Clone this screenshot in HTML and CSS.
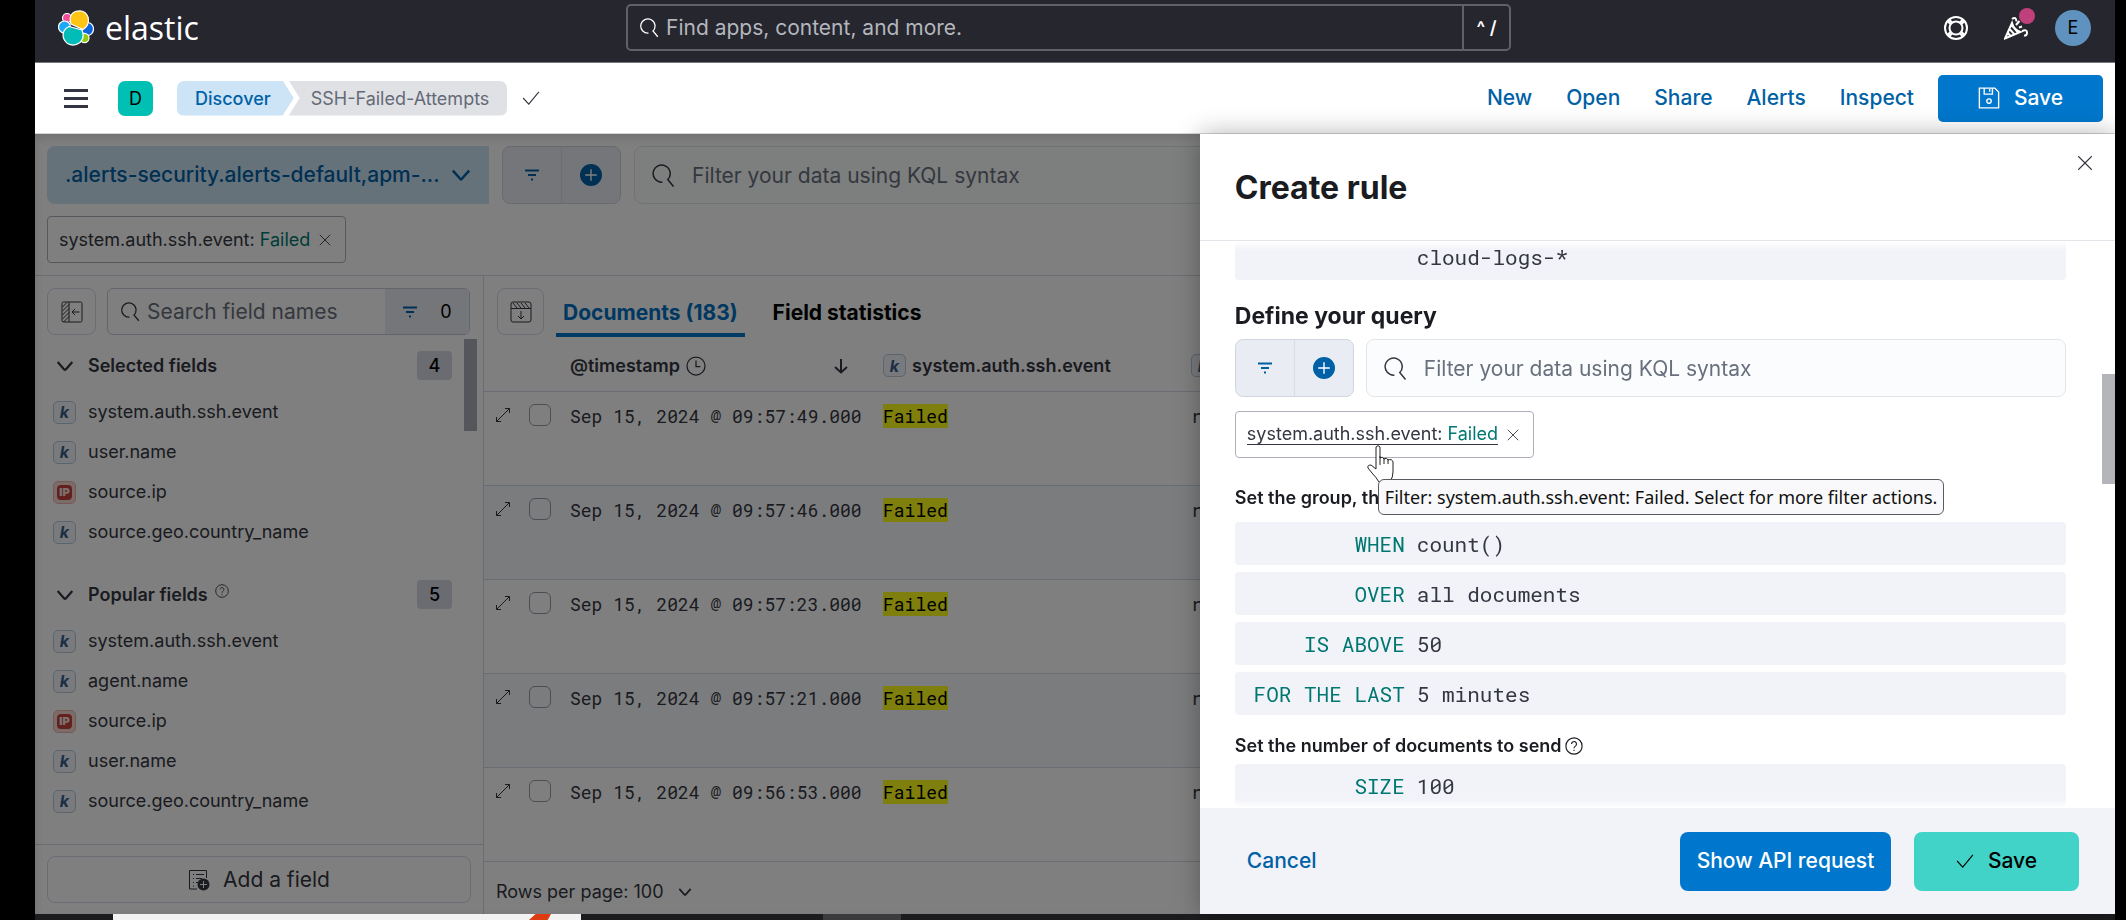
FILE: index.html
```html
<!DOCTYPE html>
<html lang="en">
<head>
<meta charset="utf-8">
<title>SSH-Failed-Attempts - Discover - Elastic</title>
<link rel="stylesheet" href="styles.css">
</head>
<body>
<svg class="sprite" aria-hidden="true">
  <symbol id="search" viewBox="0 0 16 16"><path d="M7.600 12.100A5.700 5.700 0 1 1 11.200 10.400L15 15"/></symbol>
  <symbol id="chevron" viewBox="0 0 16 16"><path d="M1.5 4.5 7.3 11q.7.7 1.4 0l5.8-6.5"/></symbol>
  <symbol id="check" viewBox="0 0 16 16"><path d="m1 8 5 5.5L15 2.5"/></symbol>
  <symbol id="cross" viewBox="0 0 16 16"><path d="m2 2 12 12M14 2 2 14"/></symbol>
  <symbol id="filter" viewBox="0 0 16 16"><path d="M1 3.5h14M4 8h8M7 12.5h2"/></symbol>
  <symbol id="plus" viewBox="0 0 16 16"><circle cx="8" cy="8" r="8" fill="currentColor" stroke="none"/><path class="cut" d="M8 3.8v8.4M3.8 8h8.4"/></symbol>
  <symbol id="help" viewBox="0 0 16 16"><circle cx="8" cy="8" r="7.2"/><path d="M5.8 6.3a2.2 2.2 0 1 1 3.4 1.8Q8 8.800 8 10M8 11.300v1.200"/></symbol>
  <symbol id="clock" viewBox="0 0 16 16"><circle cx="8" cy="8" r="7.200"/><path d="M8 3.500V8.500h3.500"/></symbol>
  <symbol id="down" viewBox="0 0 16 16"><path d="M8 1v13.500M2 9l6 5.500L14 9"/></symbol>
  <symbol id="expand" viewBox="0 0 16 16"><path d="M10 1.500h4.500V6M14.500 1.500l-13 13M1.500 10v4.500H6"/></symbol>
  <symbol id="floppy" viewBox="0 0 16 16"><path d="M1 .8h11.200L15 3.600v11.600H1zM4.500 1v4.200h6V1M8.500 1.500v2"/><circle cx="8" cy="10.200" r="1.600"/></symbol>
  <symbol id="side" viewBox="0 0 22 22"><rect x="1" y="1" width="20" height="20" rx="1.500"/><path d="M8 1v20M1.500 6 6 1.500M1.500 10 8 3.500M1.500 14 8 7.500M1.500 18 8 11.500M2.500 21 8 15.500M18.500 11H11M14 8l-3 3 3 3"/></symbol>
  <symbol id="topbox" viewBox="0 0 22 22"><rect x="1" y="1" width="20" height="20" rx="2"/><path d="M1 7.500h20M3 2l4 5M7 2l4 5M11 2l4 5M15 2l4 5M11 10v8M8 15l3 3 3-3"/></symbol>
  <symbol id="addfield" viewBox="0 0 22 22"><path d="M9 20H1.500V1.500h17V9M5 5.500h1M8 5.500h8M5 9.500h1M8 9.500h6M5 13.500h1M8 13.500h2M5 17h1"/><circle cx="15.500" cy="15.500" r="6" fill="currentColor" stroke="none"/><path class="cut" d="M15.500 12v7M12 15.500h7"/></symbol>
  <symbol id="buoy" viewBox="0 0 24 24"><circle cx="12" cy="12" r="11"/><circle cx="12" cy="12" r="6.500"/><path d="M5 3.500 8.500 7M3.500 5 7 8.500M19 3.500 15.500 7M20.500 5 17 8.500M5 20.500 8.500 17M3.500 19 7 15.500M19 20.500 15.500 17M20.500 19 17 15.500"/></symbol>
  <symbol id="cheer" viewBox="0 0 24 24"><path d="M8 7 1 22.500 16.500 16Q10 14 8 7zM5.500 13l5 5.500M4 17l3 3.500M8 9.500l6 7M8 3q4-3 4.500 2.500M12 9l3.500-4M15 11.500l3-1M18 15q5-2 5 1.500t-3 3"/></symbol>
</svg>

<header class="global">
  <a class="brand" href="#">
    <svg class="brand-mark" viewBox="0 0 36 36" aria-hidden="true">
      <g stroke="#fff" stroke-width="1.200">
        <ellipse cx="9" cy="8" rx="4.500" ry="4.500" fill="#f04e98"/>
        <ellipse cx="6.500" cy="17" rx="6" ry="6" fill="#1ba9f5"/>
        <ellipse cx="29.500" cy="19" rx="6" ry="6.500" fill="#0b64dd"/>
        <ellipse cx="26.500" cy="28" rx="4.500" ry="4.700" fill="#93c90e"/>
        <path d="M13 14Q10 4 18 1.300q9-2.300 12 5.700 2 8-5 12.500z" fill="#fec514"/>
        <path d="M11 16.500 24 20q3 8-2 12.500-6 4.500-12.500 1Q3 28 6 21q1.500-3 5-4.500z" fill="#02bcb7"/>
      </g>
    </svg>
    <span class="brand-name">elastic</span>
  </a>
  <form class="global-search">
    <svg class="icon icon-20"><use href="#search"/></svg>
    <input type="search" aria-label="Find apps, content, and more" placeholder="Find apps, content, and more.">
    <span class="keys">^ /</span>
  </form>
  <div class="global-actions">
    <button class="plain" aria-label="Help"><svg class="icon icon-24"><use href="#buoy"/></svg></button>
    <button class="plain news" aria-label="News"><svg class="icon icon-24"><use href="#cheer"/></svg><span class="dot"></span></button>
    <button class="avatar" aria-label="Account">E</button>
  </div>
</header>

<nav class="appbar">
  <button class="plain burger" aria-label="Menu"><span></span><span></span><span></span></button>
  <span class="space">D</span>
  <div class="crumbs">
    <a class="crumb crumb-first" href="#">Discover</a>
    <span class="crumb crumb-last">SSH-Failed-Attempts</span>
  </div>
  <svg class="icon icon-18"><use href="#check"/></svg>
  <div class="links">
    <a href="#">New</a><a href="#">Open</a><a href="#">Share</a><a href="#">Alerts</a><a href="#">Inspect</a>
  </div>
  <button class="btn btn-primary btn-save"><svg class="icon icon-22"><use href="#floppy"/></svg>Save</button>
</nav>

<div class="workspace">
  <section class="discover">
    <div class="query">
      <button class="dataview"><span>.alerts-security.alerts-default,apm-...</span><svg class="icon icon-20"><use href="#chevron"/></svg></button>
      <div class="pair">
        <button aria-label="Saved queries"><svg class="icon icon-16"><use href="#filter"/></svg></button>
        <button aria-label="Add filter"><svg class="icon icon-22"><use href="#plus"/></svg></button>
      </div>
      <label class="kql"><svg class="icon icon-24"><use href="#search"/></svg><input type="text" aria-label="Query" placeholder="Filter your data using KQL syntax"></label>
    </div>
    <div class="pills">
      <div class="pill"><a href="#">system.auth.ssh.event: <span>Failed</span></a><button class="plain" aria-label="Remove filter"><svg class="icon icon-14"><use href="#cross"/></svg></button></div>
    </div>
    <div class="panes">
      <aside class="sidebar">
        <div class="sidebar-top">
          <button class="square" aria-label="Hide sidebar"><svg class="icon icon-22"><use href="#side"/></svg></button>
          <div class="field-search">
            <svg class="icon icon-20"><use href="#search"/></svg>
            <input type="search" aria-label="Search field names" placeholder="Search field names">
            <button class="field-filter"><svg class="icon icon-16"><use href="#filter"/></svg>0</button>
          </div>
        </div>
        <div class="fields">
          <div class="thumb"></div>
          <h3><svg class="icon icon-20"><use href="#chevron"/></svg>Selected fields<span class="count">4</span></h3>
          <ul>
            <li><i class="token">k</i>system.auth.ssh.event</li>
            <li><i class="token">k</i>user.name</li>
            <li><i class="token token-ip"><b>IP</b></i>source.ip</li>
            <li><i class="token">k</i>source.geo.country_name</li>
          </ul>
          <h3><svg class="icon icon-20"><use href="#chevron"/></svg>Popular fields<svg class="icon icon-14 raised"><use href="#help"/></svg><span class="count">5</span></h3>
          <ul>
            <li><i class="token">k</i>system.auth.ssh.event</li>
            <li><i class="token">k</i>agent.name</li>
            <li><i class="token token-ip"><b>IP</b></i>source.ip</li>
            <li><i class="token">k</i>user.name</li>
            <li><i class="token">k</i>source.geo.country_name</li>
          </ul>
        </div>
        <div class="sidebar-foot"><button class="add-field"><svg class="icon icon-22"><use href="#addfield"/></svg>Add a field</button></div>
      </aside>
      <div class="results">
        <div class="tabs">
          <button class="square" aria-label="Show chart"><svg class="icon icon-22"><use href="#topbox"/></svg></button>
          <button class="tab tab-on">Documents (183)</button>
          <button class="tab">Field statistics</button>
        </div>
        <table class="grid">
          <thead><tr>
            <th class="c-act"></th>
            <th class="c-time"><div class="th"><span>@timestamp</span><svg class="icon icon-20"><use href="#clock"/></svg><svg class="icon icon-16 push"><use href="#down"/></svg></div></th>
            <th class="c-event"><div class="th"><i class="token">k</i><span>system.auth.ssh.event</span></div></th>
            <th><div class="th"><i class="token">k</i><span>user.name</span></div></th>
          </tr></thead>
          <tbody>
            <tr><td><div class="acts"><svg class="icon icon-16"><use href="#expand"/></svg><input type="checkbox" aria-label="Select row 1"></div></td><td>Sep 15, 2024 @ 09:57:49.000</td><td><mark>Failed</mark></td><td>root</td></tr>
            <tr><td><div class="acts"><svg class="icon icon-16"><use href="#expand"/></svg><input type="checkbox" aria-label="Select row 2"></div></td><td>Sep 15, 2024 @ 09:57:46.000</td><td><mark>Failed</mark></td><td>root</td></tr>
            <tr><td><div class="acts"><svg class="icon icon-16"><use href="#expand"/></svg><input type="checkbox" aria-label="Select row 3"></div></td><td>Sep 15, 2024 @ 09:57:23.000</td><td><mark>Failed</mark></td><td>root</td></tr>
            <tr><td><div class="acts"><svg class="icon icon-16"><use href="#expand"/></svg><input type="checkbox" aria-label="Select row 4"></div></td><td>Sep 15, 2024 @ 09:57:21.000</td><td><mark>Failed</mark></td><td>root</td></tr>
            <tr><td><div class="acts"><svg class="icon icon-16"><use href="#expand"/></svg><input type="checkbox" aria-label="Select row 5"></div></td><td>Sep 15, 2024 @ 09:56:53.000</td><td><mark>Failed</mark></td><td>root</td></tr>
          </tbody>
        </table>
        <button class="rows-per-page">Rows per page: 100<svg class="icon icon-14"><use href="#chevron"/></svg></button>
      </div>
    </div>
  </section>

  <div class="veil"></div>

  <aside class="flyout" role="dialog" aria-labelledby="flyout-title">
    <div class="flyout-head">
      <h2 id="flyout-title">Create rule</h2>
      <button class="plain close" aria-label="Close"><svg class="icon icon-18"><use href="#cross"/></svg></button>
    </div>
    <div class="flyout-body">
      <div class="expr expr-first"><span class="val">cloud-logs-*</span></div>
      <h4 class="big">Define your query</h4>
      <div class="query">
        <div class="pair">
          <button aria-label="Saved queries"><svg class="icon icon-16"><use href="#filter"/></svg></button>
          <button aria-label="Add filter"><svg class="icon icon-22"><use href="#plus"/></svg></button>
        </div>
        <label class="kql"><svg class="icon icon-24"><use href="#search"/></svg><input type="text" aria-label="Rule query" placeholder="Filter your data using KQL syntax"></label>
      </div>
      <div class="pill pill-hover">
        <a href="#">system.auth.ssh.event: <span>Failed</span></a><button class="plain" aria-label="Remove filter"><svg class="icon icon-14"><use href="#cross"/></svg></button>
        <svg class="hand" viewBox="0 0 28 40" aria-hidden="true"><path d="M9 3q2-3 4 0v11q3-2 4 1 3-2 4 1 4-1.500 5 2v10q0 5-3 10H12Q9 33 5 29L1 24q-1-3 3-3l5 4z"/><path d="M13 12v9M17 14v6M21 15v5"/></svg>
        <div class="tip" role="tooltip">Filter: system.auth.ssh.event: Failed. Select for more filter actions.</div>
      </div>
      <h4>Set the group, threshold, and time window</h4>
      <div class="exprs">
        <button class="expr"><span class="key">WHEN</span><span class="val">count()</span></button>
        <button class="expr"><span class="key">OVER</span><span class="val">all documents</span></button>
        <button class="expr"><span class="key">IS ABOVE</span><span class="val">50</span></button>
        <button class="expr"><span class="key">FOR THE LAST</span><span class="val">5 minutes</span></button>
      </div>
      <h4>Set the number of documents to send<svg class="icon icon-18"><use href="#help"/></svg></h4>
      <button class="expr"><span class="key">SIZE</span><span class="val">100</span></button>
    </div>
    <div class="flyout-thumb"></div>
    <div class="flyout-foot">
      <button class="plain cancel">Cancel</button>
      <button class="btn btn-primary btn-api">Show API request</button>
      <button class="btn btn-success"><svg class="icon icon-18"><use href="#check"/></svg>Save</button>
    </div>
  </aside>
</div>

<footer class="desktop"><div class="window"><div class="flare"></div></div><div class="task"></div></footer>
</body>
</html>
```
FILE: styles.css
```css
* { box-sizing: border-box; }
body {
  margin: 0;
  padding: 0 11px 0 35px;
  min-height: 100vh;
  display: flex;
  flex-direction: column;
  overflow: hidden;
  background: #000;
  color: #343741;
  font: 18px/24px Inter, "Liberation Sans", sans-serif;
}
button, input { font: inherit; color: inherit; }
button { border: 0; padding: 0; background: none; cursor: pointer; }
input { border: 0; padding: 0; background: none; outline: 0; min-width: 0; }
input::placeholder { color: #69707d; opacity: 1; }
a { color: inherit; text-decoration: none; }
h2, h3, h4, ul { margin: 0; padding: 0; }
ul { list-style: none; }
.sprite { display: none; }
.plain { display: flex; align-items: center; justify-content: center; }

.icon { flex: none; fill: none; stroke: currentColor; stroke-width: 1; }
.icon-14 { width: 14px; height: 14px; }
.icon-16 { width: 16px; height: 16px; }
.icon-18 { width: 18px; height: 18px; }
.icon-20 { width: 20px; height: 20px; }
.icon-22 { width: 22px; height: 22px; }
.icon-24 { width: 24px; height: 24px; }
.cut { stroke: #fff; }

/* Global header */
.global {
  flex: none;
  display: grid;
  grid-template-columns: 568fr 885fr 580fr;
  align-items: center;
  height: 63px;
  padding: 0 24px 7px 23px;
  background: #25262e;
  border-bottom: 1px solid #77787d;
  color: #fff;
}
.brand { display: flex; align-items: center; gap: 11px; }
.brand-mark { width: 36px; height: 36px; }
.brand-name { font: 32px/40px "Open Sans", "Noto Sans", sans-serif; }
.global-search {
  display: flex;
  align-items: center;
  gap: 7px;
  height: 47px;
  padding-left: 11px;
  border: 2px solid #5f6069;
  border-radius: 5px;
}
.global-search input { flex: 1; font-size: 21px; }
.global-search input::placeholder { color: #b4b6bd; }
.keys {
  width: 47px;
  align-self: stretch;
  display: flex;
  align-items: center;
  justify-content: center;
  border-left: 2px solid #5f6069;
  font-weight: 600;
}
.global-actions { display: flex; justify-content: flex-end; align-items: center; gap: 36px; }
.global-actions .icon { stroke-width: 2; }
.news { position: relative; }
.dot { position: absolute; top: -8px; right: -7px; width: 16px; height: 16px; border-radius: 50%; background: #c0407c; }
.avatar { width: 36px; height: 36px; margin-left: -9px; border-radius: 50%; background: #6092c0; color: #000; }

/* Application header */
.appbar {
  flex: none;
  display: flex;
  align-items: center;
  height: 71px;
  padding: 0 12px 0 29px;
  background: #fff;
  border-bottom: 1px solid #d3d5da;
}
.burger { flex-direction: column; gap: 5px; width: 24px; }
.burger span { width: 24px; height: 3px; background: #343741; }
.space { width: 35px; margin: 0 24px 0 30px; border-radius: 7px; background: #00bfb3; color: #000; line-height: 35px; text-align: center; }
.crumbs { display: flex; margin-right: 15px; }
.crumb { padding: 0 18px; line-height: 35px; }
.crumb-first {
  padding-right: 23px;
  border-radius: 7px 0 0 7px;
  background: #cce4f5;
  color: #0061a6;
  font-weight: 500;
  clip-path: polygon(0 0, calc(100% - 11px) 0, 100% 50%, calc(100% - 11px) 100%, 0 100%);
}
.crumb-last {
  margin-left: -5px;
  padding-left: 22px;
  border-radius: 0 7px 7px 0;
  background: #e0e1e4;
  color: #646a77;
  clip-path: polygon(0 0, 100% 0, 100% 100%, 0 100%, 11px 50%);
}
.links { display: flex; gap: 34px; margin: 0 24px 0 auto; color: #0061a6; font-size: 21px; font-weight: 500; }
.btn { display: flex; align-items: center; justify-content: center; gap: 14px; border-radius: 8px; font-size: 21px; font-weight: 500; }
.btn-primary { background: #0077cc; color: #fff; }
.btn-save { width: 165px; height: 47px; border-radius: 5px; }

/* Discover */
.workspace { position: relative; flex: 1; display: flex; flex-direction: column; background: #fff; }
.discover { flex: 1; display: flex; flex-direction: column; }
.query { display: flex; gap: 13px; height: 58px; }
.discover > .query { margin: 12px 0 0 12px; }
.dataview {
  width: 442px;
  display: flex;
  align-items: center;
  justify-content: space-between;
  padding: 0 18px;
  border-radius: 8px 0 0 8px;
  background: #cce4f5;
  color: #0061a6;
  font-size: 21px;
  font-weight: 500;
}
.dataview .icon { stroke-width: 2; }
.pair { width: 119px; display: flex; border: 1px solid #d0d5e0; border-radius: 8px; background: #e9edf3; color: #0061a6; }
.pair button { flex: 1; display: flex; align-items: center; justify-content: center; }
.pair button + button { border-left: 1px solid #d8dde7; }
.pair .icon-16, .field-filter .icon { stroke-width: 2; }
.kql {
  flex: 1;
  display: flex;
  align-items: center;
  gap: 17px;
  padding: 2px 0 0 16px;
  border: 1px solid #e3e5ea;
  border-radius: 8px;
  background: #fbfcfd;
}
.kql input { flex: 1; font-size: 21px; }
.pills { padding: 12px; border-bottom: 1px solid #d3dae6; }
.pill {
  position: relative;
  width: max-content;
  height: 47px;
  display: flex;
  align-items: center;
  gap: 8px;
  padding: 0 13px 0 11px;
  border: 1px solid #abb0bb;
  border-radius: 4px;
}
.pill span { color: #007871; }
.panes { flex: 1; display: flex; }
.sidebar { flex: none; width: 449px; display: flex; flex-direction: column; border-right: 1px solid #d3dae6; }
.sidebar-top { display: flex; gap: 11px; padding: 12px 13px 0 12px; }
.square { flex: none; width: 49px; height: 47px; display: flex; align-items: center; justify-content: center; border: 1px solid #d3dae6; border-radius: 8px; }
.field-search { flex: 1; min-width: 0; display: flex; align-items: center; gap: 7px; height: 47px; padding-left: 12px; border: 1px solid #c5cad6; border-radius: 6px; }
.field-search input { flex: 1; font-size: 21px; }
.field-filter { flex: none; width: 84px; align-self: stretch; display: flex; align-items: center; justify-content: center; gap: 22px; background: #e9edf3; color: #000; }
.field-filter .icon { color: #0061a6; }
.fields { position: relative; flex: 1; padding: 16px 31px 0 18px; }
.thumb { position: absolute; top: 4px; right: 6px; width: 13px; height: 92px; background: #abadb6; }
.fields h3 { display: flex; align-items: center; gap: 13px; height: 29px; font-size: 18px; font-weight: 600; }
.fields h3 .icon-20 { margin: 0 1px 0 3px; stroke-width: 2; width: 18px; }
.fields h3 .raised { margin: 0 0 8px -6px; }
.count { width: 35px; margin-left: auto; border-radius: 4px; background: #d5d9e2; color: #000; font-weight: 500; line-height: 29px; text-align: center; }
.fields ul { margin-top: 12px; }
.fields ul + h3 { margin-top: 28px; }
.fields li { display: flex; align-items: center; gap: 12px; height: 40px; }
.token {
  width: 23px;
  height: 23px;
  display: flex;
  align-items: center;
  justify-content: center;
  border: 1px solid #b9c8d8;
  border-radius: 5px;
  background: #f0f5fa;
  color: #3a5f88;
  font-size: 16px;
  font-weight: 700;
}
.token-ip { border-color: #e6b5ae; background: #f7d9d4; font-style: normal; }
.token-ip b { padding: 0 2px; border-radius: 4px; background: #c4433c; color: #fbe3e0; font-size: 11px; line-height: 15px; }
.sidebar-foot { padding: 11px 12px; border-top: 1px solid #d3dae6; }
.add-field { width: 100%; height: 47px; display: flex; align-items: center; justify-content: center; gap: 13px; border: 1px solid #d3dae6; border-radius: 8px; font-size: 21px; }

.results { flex: 1; display: flex; flex-direction: column; min-width: 0; }
.tabs { display: flex; height: 61px; padding: 12px 0 0 13px; }
.tabs .square { width: 47px; margin-right: 12px; }
.tab { margin-right: 21px; padding: 4px 7px 0; border-bottom: 4px solid transparent; color: #000; font-size: 21px; font-weight: 700; }
.tab-on { border-color: #0077cc; color: #0071c2; }
.grid { width: 100%; border-collapse: collapse; table-layout: fixed; }
.grid th { height: 54px; padding: 4px 0 0; border-bottom: 1px solid #d3dae6; font-weight: 600; text-align: left; }
.th { display: flex; align-items: center; gap: 6px; }
.push { margin: 0 34px 0 auto; stroke-width: 2; }
.c-act { width: 86px; }
.c-time { width: 313px; }
.c-event { width: 308px; }
.grid td { height: 94px; padding: 12px 0 0; border-bottom: 1px solid #d3dae6; vertical-align: top; font: 18px/24px "Roboto Mono", "DejaVu Sans Mono", monospace; }
.grid tbody tr:nth-child(even) { background: #f7f8fc; }
.acts { display: flex; align-items: center; gap: 18px; padding-left: 11px; }
.acts input { appearance: none; width: 22px; height: 22px; margin: 0; border: 1px solid #979ca8; border-radius: 6px; }
mark { background: #ffff1a; color: #000; }
.rows-per-page { display: flex; align-items: center; gap: 14px; margin: 8px 0 0 12px; flex: 1; }
.rows-per-page .icon { stroke-width: 2; }

.veil { position: absolute; inset: 0; background: rgb(0 0 0 / 50%); box-shadow: inset 0 4px 8px rgb(0 0 0 / 12%); }

/* Flyout */
.flyout { position: absolute; top: 0; right: 0; bottom: 0; width: 44%; display: flex; flex-direction: column; background: #fff; box-shadow: 0 0 24px rgb(0 0 0 / 30%); }
.flyout-head { display: flex; justify-content: space-between; height: 107px; padding: 20px 21px 0 35px; border-bottom: 1px solid #e3e5ea; }
.flyout h2 { color: #1a1c21; font-size: 32px; font-weight: 700; line-height: 68px; }
.close { height: 18px; }
.flyout-body {
  flex: 1 1 0;
  min-height: 0;
  overflow: hidden;
  padding: 0 49px 0 35px;
  mask-image: linear-gradient(transparent, #000 9px, #000 calc(100% - 9px), transparent);
}
.flyout h4 { display: flex; align-items: center; gap: 3px; color: #1a1c21; font-size: 18px; font-weight: 600; }
.flyout h4.big { margin: 24px 0 11px; font-size: 23px; font-weight: 700; }
.flyout .query { gap: 12px; }
.pill-hover { margin: 14px 0 28px; }
.pill-hover a { border-bottom: 1px solid #343741; line-height: 20px; }
.hand { position: absolute; top: 32px; left: 131px; width: 28px; height: 40px; fill: #fff; stroke: #222; stroke-width: 1; }
.tip {
  position: absolute;
  top: 67px;
  left: 142px;
  z-index: 1;
  padding: 0 6px;
  border: 1px solid #5a5a60;
  border-radius: 6px;
  background: #f9f9fb;
  color: #111;
  font: 18px/34px "Noto Sans", "Open Sans", sans-serif;
  white-space: nowrap;
}
.exprs { display: flex; flex-direction: column; gap: 7px; margin: 12px 0 19px; }
.expr { width: 100%; height: 43px; display: flex; align-items: center; gap: 12px; border-radius: 4px; background: #f2f3f9; font: 21px/24px "Roboto Mono", "DejaVu Sans Mono", monospace; }
.expr-first { margin-top: -4px; padding-bottom: 3px; }
.key { width: 170px; color: #007871; text-align: right; }
.expr-first .val { margin-left: 182px; }
.exprs + h4 { margin-bottom: 6px; }
.flyout-thumb { position: absolute; top: 240px; right: 0; width: 13px; height: 110px; background: #b4b5ba; }
.flyout-foot { display: flex; align-items: center; gap: 23px; height: 106px; padding: 0 36px 0 47px; background: #f1f3f9; font-size: 21px; }
.cancel { margin-right: auto; color: #0061a6; font-weight: 500; }
.btn-api { width: 211px; height: 59px; }
.btn-success { width: 165px; height: 59px; background: #42d3c8; color: #000; }

/* Desktop strip below the browser window */
.desktop { flex: none; display: flex; gap: 242px; height: 6px; padding-left: 78px; background: #1c1c1e; }
.window { width: 468px; display: flex; background: #f2f2f2; }
.flare { width: 22px; margin-left: 416px; background: #dd3b11; clip-path: polygon(30% 0, 100% 0, 85% 100%, 0 100%); }
.task { width: 78px; background: #3b3b3e; }
```
